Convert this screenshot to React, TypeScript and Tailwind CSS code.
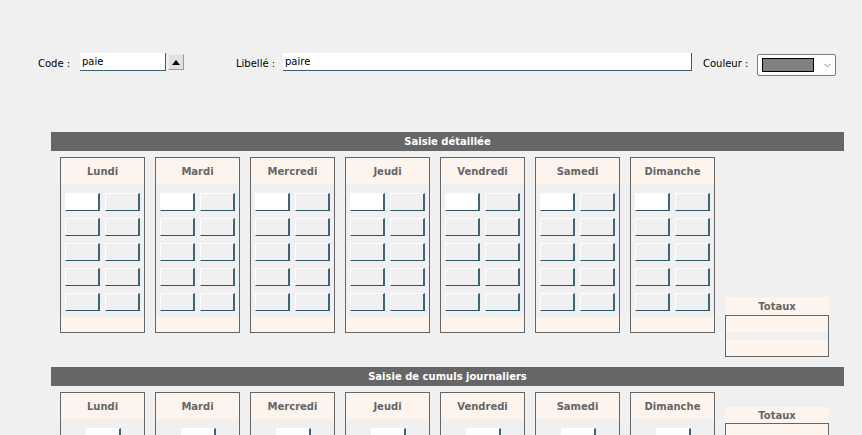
import { ChevronDown } from "lucide-react";

const days = ["Lundi", "Mardi", "Mercredi", "Jeudi", "Vendredi", "Samedi", "Dimanche"];

const font = { fontFamily: '"DejaVu Sans", Tahoma, Verdana, sans-serif' };

function Cell({ white }: { white?: boolean }) {
  return (
    <div
      className={`h-[18px] w-[35px] border-t border-l border-white border-b-[1px] border-r-[2px] border-b-[#2c5566] border-r-[#3b6676] ${
        white ? "bg-white" : "bg-[#f0f0f0]"
      }`}
    />
  );
}

function SectionBar({ title }: { title: string }) {
  return (
    <div className="ml-[51px] flex h-[19px] w-[793px] items-center justify-center bg-[#666666] text-[10px] font-bold text-white">
      {title}
    </div>
  );
}

function DayHeader({ label }: { label: string }) {
  return (
    <div className="flex h-[26px] items-center justify-center bg-[#fdf4ed] text-[10px] font-bold text-[#666666]">
      {label}
    </div>
  );
}

function DetailPanel({ label }: { label: string }) {
  return (
    <div className="flex h-[176px] w-[85px] flex-col border border-[#666666] bg-[#f0f0f0]">
      <DayHeader label={label} />
      <div className="flex flex-1 flex-col gap-[7px] pt-[9px]">
        {[0, 1, 2, 3, 4].map((row) => (
          <div className="flex justify-center gap-[5px]" key={row}>
            <Cell white={row === 0} />
            <Cell />
          </div>
        ))}
      </div>
      <div className="h-[15px] bg-[#fdf4ed]" />
    </div>
  );
}

function CumulPanel({ label }: { label: string }) {
  return (
    <div className="flex h-[60px] w-[85px] flex-col border border-[#666666] bg-[#f0f0f0]">
      <DayHeader label={label} />
      <div className="flex justify-center pt-[9px] pl-[2px]">
        <Cell white />
      </div>
    </div>
  );
}

function Totaux({ headerHeight }: { headerHeight: string }) {
  return (
    <div className="w-[104px]">
      <div
        className={`flex ${headerHeight} items-center justify-center bg-[#fdf4ed] text-[10px] font-bold text-[#666666]`}
      >
        Totaux
      </div>
      <div className="flex h-[42px] flex-col border border-[#666666] bg-[#fdf4ed]">
        <div className="h-[16px]" />
        <div className="h-[8px] bg-[#f0f0f0]" />
        <div className="flex-1" />
      </div>
    </div>
  );
}

export default function App() {
  return (
    <div className="h-[435px] w-[862px] overflow-hidden bg-[#f0f0f0] text-black" style={font}>
      <div className="flex items-start pt-[53px] pl-[38px] text-[10px]">
        <span className="mt-[3px] w-[42px]">Code :</span>
        <div className="flex h-[18px] w-[86px] items-center border-b border-r border-[#34606f] bg-white pl-[2px]">
          paie
        </div>
        <button className="mt-[1px] ml-[2px] flex h-[16px] w-[16px] items-center justify-center border border-[#9a9a9a] border-t-[#ececec] border-l-[#ececec] bg-[#e1e1e1]">
          <svg width="8" height="5" viewBox="0 0 8 5">
            <path d="M0 5 L4 0 L8 5 Z" fill="#000" />
          </svg>
        </button>
        <span className="mt-[3px] ml-[52px] w-[47px]">Libellé :</span>
        <div className="flex h-[18px] w-[409px] items-center border-b border-r border-[#34606f] bg-white pl-[2px]">
          paire
        </div>
        <span className="mt-[3px] ml-[11px] w-[54px]">Couleur :</span>
        <div className="mt-[1px] flex h-[22px] w-[79px] items-center rounded-[2px] border border-[#7a7a7a] bg-white pl-[4px]">
          <div className="h-[14px] w-[52px] border border-black bg-[#808080]" />
          <ChevronDown className="ml-[8px] text-[#555]" size={11} strokeWidth={1.5} aria-hidden />
        </div>
      </div>

      <div className="mt-[56px]">
        <SectionBar title="Saisie détaillée" />
      </div>
      <div className="mt-[6px] flex items-start gap-[10px] pl-[60px]">
        {days.map((day) => (
          <DetailPanel key={day} label={day} />
        ))}
        <div className="mt-[140px]">
          <Totaux headerHeight="h-[18px]" />
        </div>
      </div>

      <div className="mt-[10px]">
        <SectionBar title="Saisie de cumuls journaliers" />
      </div>
      <div className="mt-[6px] flex items-start gap-[10px] pl-[60px]">
        {days.map((day) => (
          <CumulPanel key={day} label={day} />
        ))}
        <div className="mt-[15px]">
          <Totaux headerHeight="h-[16px]" />
        </div>
      </div>
    </div>
  );
}
